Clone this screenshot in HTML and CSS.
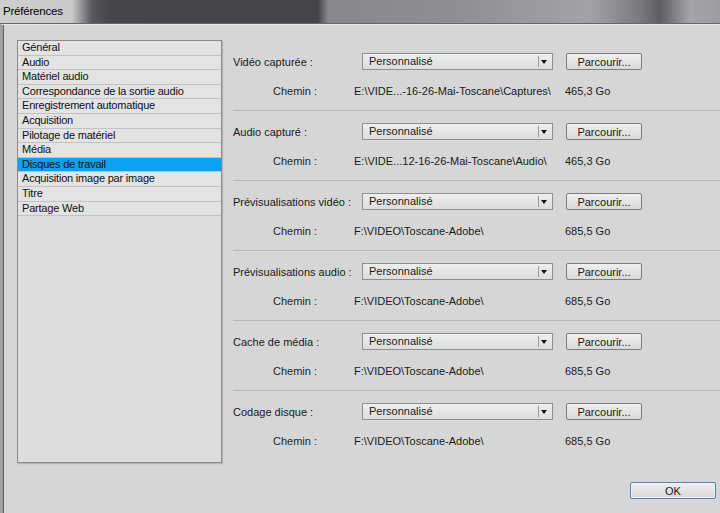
FILE: index.html
```html
<!DOCTYPE html>
<html lang="fr">
<head>
    <meta charset="UTF-8">
    <title>Préférences</title>
    <link rel="stylesheet" href="styles.css">
</head>
<body>
    <div class="titlebar">
        <span class="title">Préférences</span>
    </div>
    <div class="window">
        <div class="content">
            <ul class="nav">
                <li>Général</li>
                <li>Audio</li>
                <li>Matériel audio</li>
                <li>Correspondance de la sortie audio</li>
                <li>Enregistrement automatique</li>
                <li>Acquisition</li>
                <li>Pilotage de matériel</li>
                <li>Média</li>
                <li class="selected">Disques de travail</li>
                <li>Acquisition image par image</li>
                <li>Titre</li>
                <li>Partage Web</li>
            </ul>

            <div class="panel">
                <div class="section">
                    <div class="row">
                        <span class="label">Vidéo capturée :</span>
                        <div class="select"><span>Personnalisé</span><i class="arrow"></i></div>
                        <button class="btn">Parcourir...</button>
                    </div>
                    <div class="row">
                        <span class="path-label">Chemin :</span>
                        <span class="path">E:\VIDE...-16-26-Mai-Toscane\Captures\</span>
                        <span class="size">465,3 Go</span>
                    </div>
                </div>
                <div class="section">
                    <div class="row">
                        <span class="label">Audio capturé :</span>
                        <div class="select"><span>Personnalisé</span><i class="arrow"></i></div>
                        <button class="btn">Parcourir...</button>
                    </div>
                    <div class="row">
                        <span class="path-label">Chemin :</span>
                        <span class="path">E:\VIDE...12-16-26-Mai-Toscane\Audio\</span>
                        <span class="size">465,3 Go</span>
                    </div>
                </div>
                <div class="section">
                    <div class="row">
                        <span class="label">Prévisualisations vidéo :</span>
                        <div class="select"><span>Personnalisé</span><i class="arrow"></i></div>
                        <button class="btn">Parcourir...</button>
                    </div>
                    <div class="row">
                        <span class="path-label">Chemin :</span>
                        <span class="path">F:\VIDEO\Toscane-Adobe\</span>
                        <span class="size">685,5 Go</span>
                    </div>
                </div>
                <div class="section">
                    <div class="row">
                        <span class="label">Prévisualisations audio :</span>
                        <div class="select"><span>Personnalisé</span><i class="arrow"></i></div>
                        <button class="btn">Parcourir...</button>
                    </div>
                    <div class="row">
                        <span class="path-label">Chemin :</span>
                        <span class="path">F:\VIDEO\Toscane-Adobe\</span>
                        <span class="size">685,5 Go</span>
                    </div>
                </div>
                <div class="section">
                    <div class="row">
                        <span class="label">Cache de média :</span>
                        <div class="select"><span>Personnalisé</span><i class="arrow"></i></div>
                        <button class="btn">Parcourir...</button>
                    </div>
                    <div class="row">
                        <span class="path-label">Chemin :</span>
                        <span class="path">F:\VIDEO\Toscane-Adobe\</span>
                        <span class="size">685,5 Go</span>
                    </div>
                </div>
                <div class="section">
                    <div class="row">
                        <span class="label">Codage disque :</span>
                        <div class="select"><span>Personnalisé</span><i class="arrow"></i></div>
                        <button class="btn">Parcourir...</button>
                    </div>
                    <div class="row">
                        <span class="path-label">Chemin :</span>
                        <span class="path">F:\VIDEO\Toscane-Adobe\</span>
                        <span class="size">685,5 Go</span>
                    </div>
                </div>
            </div>
        </div>
        <div class="footer">
            <button class="btn ok-btn">OK</button>
        </div>
    </div>
</body>
</html>
```

FILE: styles.css
```css
* {
    margin: 0;
    padding: 0;
    box-sizing: border-box;
}

body {
    width: 720px;
    height: 513px;
    overflow: hidden;
    font-family: 'Liberation Sans', Arial, sans-serif;
    font-size: 11px;
    color: #1a1a1a;
    background-color: #d6d6d6;
}

/* window title bar (glass over the desktop) */
.titlebar {
    height: 24px;
    padding: 5px 0 0 3px;
    border-bottom: 1px solid #66666a;
    background: linear-gradient(90deg, #cfcfcf 0, #c9c9c9 72px, #58575b 92px, #454448 110px, #444347 318px, #88878c 328px, #8f8e93 460px, #a3a2a7 590px, #7a797e 640px, #5e5d62 660px, #a4a3a8 690px, #9c9ba0 720px);
}

.title {
    font-size: 11.5px;
    letter-spacing: -0.2px;
    color: #000;
}

.window {
    height: 489px;
    border-left: 3px solid #a2a2a2;
    border-top: 1px solid #e6e6e6;
    box-shadow: inset 1px 0 0 #5e5e5e;
    background-color: #d6d6d6;
}

.content {
    display: flex;
    padding: 15px 0 0 14px;
}

/* left category list */
.nav {
    list-style: none;
    width: 205px;
    height: 423px;
    border: 1px solid #8a8a8a;
    background-color: #dddddd;
    box-shadow: 1px 1px 1px rgba(0, 0, 0, 0.15);
}

.nav li {
    height: 14.6px;
    line-height: 13px;
    padding-left: 4px;
    background-color: #e3e3e3;
    border-bottom: 1px solid #c2c2c2;
    color: #111;
    letter-spacing: -0.2px;
    white-space: nowrap;
}

.nav li.selected {
    background-color: #0ea0f2;
}

/* right settings panel */
.panel {
    flex: 1;
    margin-left: 11px;
    padding-top: 1px;
}

.section {
    padding: 12px 0 11px;
    border-bottom: 1px solid #b8b8b8;
}

.section:last-child {
    border-bottom: none;
}

.row {
    display: flex;
    align-items: center;
    height: 17px;
}

.row + .row {
    margin-top: 12px;
}

.label {
    width: 129px;
    white-space: nowrap;
}

.select {
    position: relative;
    width: 191px;
    height: 17px;
    padding-left: 6px;
    line-height: 15px;
    border: 1px solid #8e8e8e;
    background: linear-gradient(#eeeeee, #dddddd);
}

.select::after {
    content: "";
    position: absolute;
    right: 13px;
    top: 2px;
    height: 11px;
    border-left: 1px solid #9a9a9a;
}

.arrow {
    position: absolute;
    right: 5px;
    top: 6px;
    border-left: 3px solid transparent;
    border-right: 3px solid transparent;
    border-top: 4px solid #111;
}

.btn {
    font-family: inherit;
    font-size: 11px;
    color: #1a1a1a;
    width: 76px;
    height: 17px;
    margin-left: 13px;
    border: 1px solid #7c7c7c;
    border-radius: 2px;
    background: linear-gradient(#efefef, #d9d9d9);
    line-height: 14px;
}

.path-label {
    width: 121px;
    padding-left: 40px;
    color: #262626;
}

.path {
    width: 211px;
    white-space: nowrap;
    color: #1a1a1a;
}

.size {
    color: #1a1a1a;
}

.footer {
    display: flex;
    justify-content: flex-end;
    padding: 19px 4px 0 0;
}

.ok-btn {
    width: 86px;
    height: 17px;
    margin-left: 0;
    border: 1px solid #4d86b6;
    border-radius: 2px;
    box-shadow: inset 0 0 0 1px #eef4fa;
}
```
